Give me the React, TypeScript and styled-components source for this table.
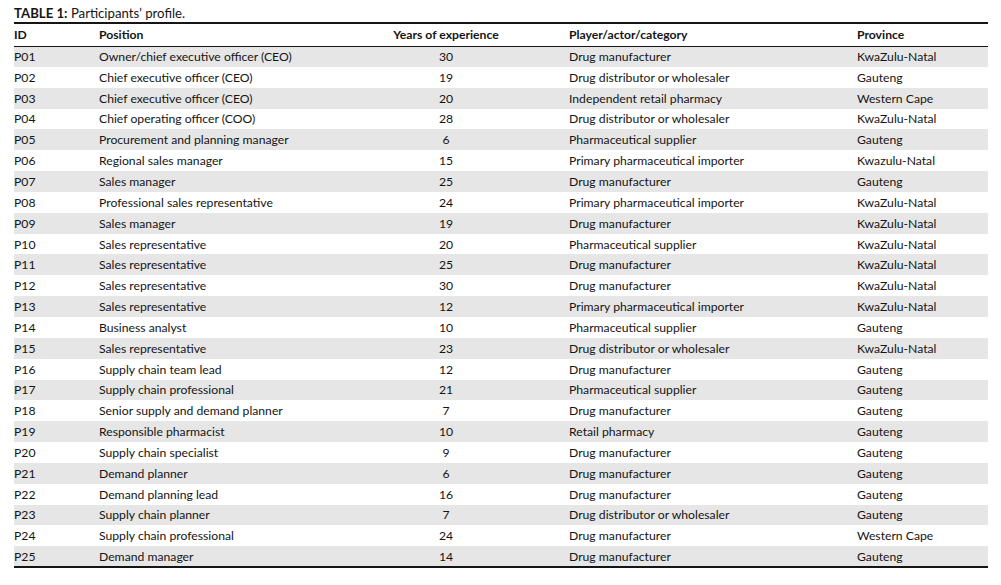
import styled, { createGlobalStyle } from 'styled-components';

const GlobalStyle = createGlobalStyle`
  html, body {
    margin: 0;
    padding: 0;
    background: #fff;
  }
  body {
    font-family: Lato, "Liberation Sans", sans-serif;
    color: #151515;
  }
`;

const Page = styled.div`
  width: 1001px;
  padding: 5px 0 0 14px;
  box-sizing: border-box;
`;

const Caption = styled.div`
  font-size: 13.2px;
  line-height: 16px;
  height: 17px;
  & b {
    font-weight: 700;
  }
`;

const Table = styled.table`
  width: 974px;
  border-collapse: collapse;
  table-layout: fixed;
  border-top: 2px solid #151515;
  border-bottom: 2px solid #151515;
  font-size: 12.2px;
`;

const HeadRow = styled.tr`
  height: 23px;
  border-bottom: 1px solid #151515;
`;

const Th = styled.th<{ $center?: boolean }>`
  font-weight: 700;
  text-align: ${(p) => (p.$center ? 'center' : 'left')};
  padding: 0;
  white-space: nowrap;
`;

const Row = styled.tr<{ $shaded: boolean }>`
  height: 20.85px;
  background: ${(p) => (p.$shaded ? '#e6e6e6' : '#fff')};
`;

const Td = styled.td<{ $center?: boolean }>`
  padding: 0;
  text-align: ${(p) => (p.$center ? 'center' : 'left')};
  white-space: nowrap;
`;

const rows: [string, string, number, string, string][] = [
  ['P01', 'Owner/chief executive officer (CEO)', 30, 'Drug manufacturer', 'KwaZulu-Natal'],
  ['P02', 'Chief executive officer (CEO)', 19, 'Drug distributor or wholesaler', 'Gauteng'],
  ['P03', 'Chief executive officer (CEO)', 20, 'Independent retail pharmacy', 'Western Cape'],
  ['P04', 'Chief operating officer (COO)', 28, 'Drug distributor or wholesaler', 'KwaZulu-Natal'],
  ['P05', 'Procurement and planning manager', 6, 'Pharmaceutical supplier', 'Gauteng'],
  ['P06', 'Regional sales manager', 15, 'Primary pharmaceutical importer', 'Kwazulu-Natal'],
  ['P07', 'Sales manager', 25, 'Drug manufacturer', 'Gauteng'],
  ['P08', 'Professional sales representative', 24, 'Primary pharmaceutical importer', 'KwaZulu-Natal'],
  ['P09', 'Sales manager', 19, 'Drug manufacturer', 'KwaZulu-Natal'],
  ['P10', 'Sales representative', 20, 'Pharmaceutical supplier', 'KwaZulu-Natal'],
  ['P11', 'Sales representative', 25, 'Drug manufacturer', 'KwaZulu-Natal'],
  ['P12', 'Sales representative', 30, 'Drug manufacturer', 'KwaZulu-Natal'],
  ['P13', 'Sales representative', 12, 'Primary pharmaceutical importer', 'KwaZulu-Natal'],
  ['P14', 'Business analyst', 10, 'Pharmaceutical supplier', 'Gauteng'],
  ['P15', 'Sales representative', 23, 'Drug distributor or wholesaler', 'KwaZulu-Natal'],
  ['P16', 'Supply chain team lead', 12, 'Drug manufacturer', 'Gauteng'],
  ['P17', 'Supply chain professional', 21, 'Pharmaceutical supplier', 'Gauteng'],
  ['P18', 'Senior supply and demand planner', 7, 'Drug manufacturer', 'Gauteng'],
  ['P19', 'Responsible pharmacist', 10, 'Retail pharmacy', 'Gauteng'],
  ['P20', 'Supply chain specialist', 9, 'Drug manufacturer', 'Gauteng'],
  ['P21', 'Demand planner', 6, 'Drug manufacturer', 'Gauteng'],
  ['P22', 'Demand planning lead', 16, 'Drug manufacturer', 'Gauteng'],
  ['P23', 'Supply chain planner', 7, 'Drug distributor or wholesaler', 'Gauteng'],
  ['P24', 'Supply chain professional', 24, 'Drug manufacturer', 'Western Cape'],
  ['P25', 'Demand manager', 14, 'Drug manufacturer', 'Gauteng'],
];

export default function App() {
  return (
    <Page>
      <GlobalStyle />
      <Caption>
        <b>TABLE 1:</b> Participants’ profile.
      </Caption>
      <Table>
        <colgroup>
          <col style={{ width: 85 }} />
          <col style={{ width: 224 }} />
          <col style={{ width: 246 }} />
          <col style={{ width: 288 }} />
          <col style={{ width: 131 }} />
        </colgroup>
        <thead>
          <HeadRow>
            <Th>ID</Th>
            <Th>Position</Th>
            <Th $center>Years of experience</Th>
            <Th>Player/actor/category</Th>
            <Th>Province</Th>
          </HeadRow>
        </thead>
        <tbody>
          {rows.map(([id, pos, yrs, cat, prov], i) => (
            <Row key={id} $shaded={i % 2 === 0}>
              <Td>{id}</Td>
              <Td>{pos}</Td>
              <Td $center>{yrs}</Td>
              <Td>{cat}</Td>
              <Td>{prov}</Td>
            </Row>
          ))}
        </tbody>
      </Table>
    </Page>
  );
}
